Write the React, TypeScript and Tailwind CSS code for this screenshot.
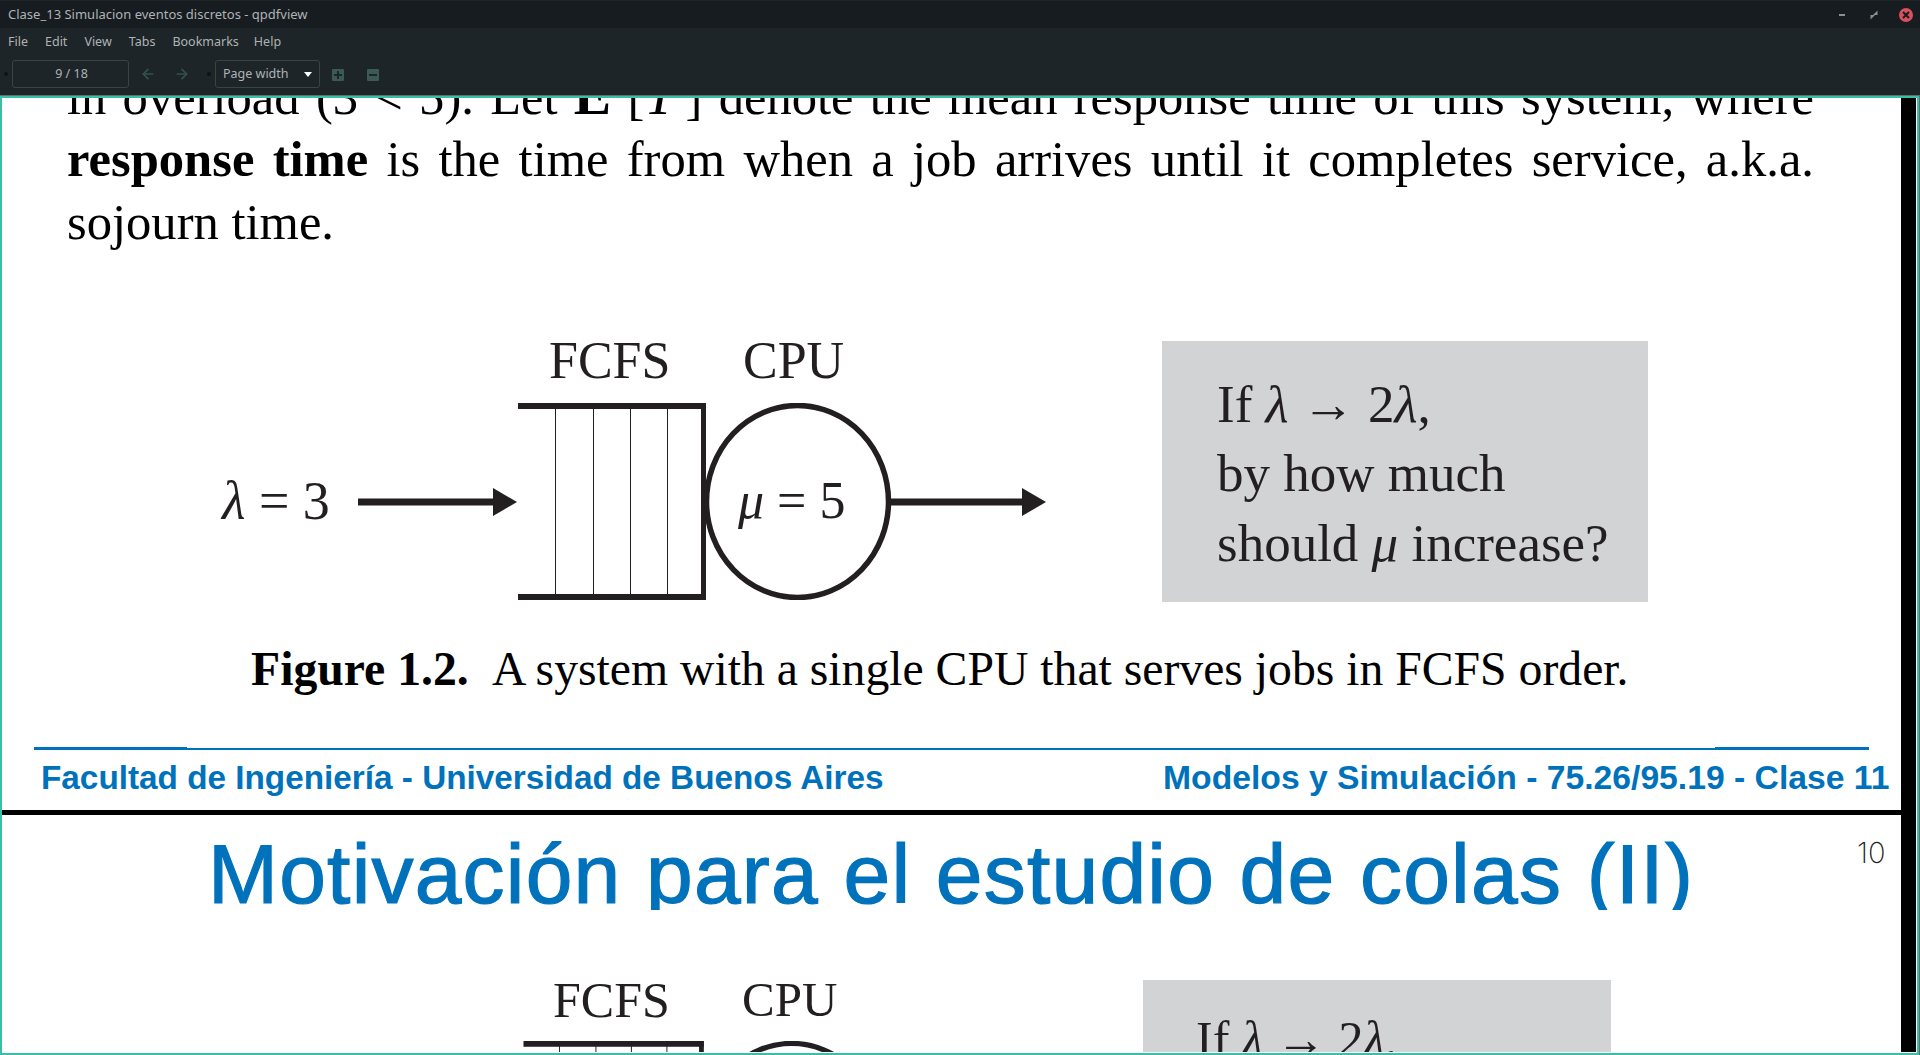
import React from 'react'
import { ArrowLeft, ArrowRight } from 'lucide-react'

const serif = `font-['Liberation_Serif',serif] text-[#231f20] leading-none whitespace-nowrap`
const sans = `font-['Liberation_Sans',sans-serif] text-[#0072bc] leading-none whitespace-nowrap`

// queue + server drawing, same shapes for both figures, only scaled
const QueueDiagram = ({ className, width, height }: { className: string; width: number; height: number }) => (
  <svg className={className} width={width} height={height} viewBox="0 0 688 197" fill="#231f20">
    <rect x="0" y="95.5" width="140" height="7" />
    <polygon points="135,85 159,99 135,113" />
    <rect x="160" y="0" width="188" height="6" />
    <rect x="160" y="191" width="188" height="6" />
    <rect x="343" y="0" width="5" height="197" />
    <rect x="197" y="3" width="1" height="190" />
    <rect x="235" y="3" width="1" height="190" />
    <rect x="272" y="3" width="1" height="190" />
    <rect x="309" y="3" width="1" height="190" />
    <ellipse cx="439.5" cy="98.5" rx="91" ry="96" fill="none" stroke="#231f20" strokeWidth="5.5" />
    <rect x="533" y="95.5" width="135" height="7" />
    <polygon points="664,85 688,99 664,113" />
  </svg>
)

const TitleBar = () => (
  <div className="flex h-[28px] items-center justify-between border-t border-[#1f272a] bg-[#161c1f] pl-[8px]">
    <span className="text-[13px] text-[#aeb3b5]">Clase_13 Simulacion eventos discretos - qpdfview</span>
    <div className="flex items-center">
      <span className="mr-[24px] h-[2px] w-[6px] bg-[#8b8f91]" />
      <svg className="mr-[20px]" width="10" height="10" viewBox="0 0 10 10" fill="#8b8f91">
        <polygon points="8.5,0.5 8.5,5 4,5" />
        <polygon points="1.5,9.5 1.5,5 6,5" />
      </svg>
      <div className="mr-[7px] flex h-[14px] w-[14px] items-center justify-center rounded-full bg-[#d9505e]">
        <svg width="8" height="8" viewBox="0 0 8 8" stroke="#161c1f" strokeWidth="2">
          <path d="M1 1 7 7M7 1 1 7" />
        </svg>
      </div>
    </div>
  </div>
)

const MenuBar = () => (
  <div className="flex h-[28px] items-center gap-[17px] bg-[#1d2528] pl-[8px] text-[12.5px] text-[#aeb3b5]">
    <span>File</span>
    <span>Edit</span>
    <span>View</span>
    <span>Tabs</span>
    <span className="-mr-[2px]">Bookmarks</span>
    <span>Help</span>
  </div>
)

const ToolBar = () => (
  <div className="flex h-[39px] items-start bg-[#1d2528] pt-[4px] text-[12.5px] text-[#aeb3b5]">
    <span className="ml-[4px] mt-[12px] h-[4px] w-[4px] rounded-full bg-[#0e1315]" />
    <div className="ml-[4px] flex h-[28px] w-[117px] items-center justify-center rounded-[3px] border border-[#3a4346] pl-[2px] pt-[1px]">9 / 18</div>
    <ArrowLeft className="ml-[11px] mt-[6px]" size={16} strokeWidth={2.5} color="#35524c" />
    <ArrowRight className="ml-[18px] mt-[6px]" size={16} strokeWidth={2.5} color="#35524c" />
    <span className="ml-[17px] mt-[12px] h-[4px] w-[4px] rounded-full bg-[#0e1315]" />
    <div className="ml-[4px] flex h-[28px] w-[105px] items-center justify-between rounded-[3px] border border-[#3a4346] pl-[7px] pr-[7px] pt-[1px]">
      <span>Page width</span>
      <span className="h-0 w-0 border-x-[4px] border-t-[5px] border-x-transparent border-t-white" />
    </div>
    <div className="ml-[12px] mt-[9px] flex h-[12px] w-[12px] items-center justify-center rounded-[1px] bg-[#3c5a55]">
      <svg width="8" height="8" viewBox="0 0 8 8" fill="#1d2528">
        <path d="M3 0h2v3h3v2H5v3H3V5H0V3h3z" />
      </svg>
    </div>
    <div className="ml-[23px] mt-[9px] flex h-[12px] w-[12px] items-center justify-center rounded-[1px] bg-[#3c5a55]">
      <span className="h-[2px] w-[8px] bg-[#1d2528]" />
    </div>
  </div>
)

const FirstSlide = () => (
  <div className="relative h-[712px] overflow-hidden bg-white">
    <p className={`${serif} absolute left-[65px] top-[-31px] w-[1747px] text-[50.6px] text-black [text-align-last:justify]`}>
      in overload (3 &lt; 5). Let <b className="text-[56px]">E</b>&nbsp;[<i className="text-[56px]">T</i>&thinsp;] denote the mean response time of this system, where
    </p>
    <p className={`${serif} absolute left-[65px] top-[36px] w-[1747px] text-[50.6px] text-black [text-align-last:justify]`}>
      <b>response time</b> is the time from when a job arrives until it completes service, a.k.a.
    </p>
    <p className={`${serif} absolute left-[65px] top-[99px] text-[50.6px] text-black`}>sojourn time.</p>

    <QueueDiagram className="absolute left-[356px] top-[305px]" width={688} height={197} />
    <span className={`${serif} absolute left-[547px] top-[237px] text-[52px]`}>FCFS</span>
    <span className={`${serif} absolute left-[741px] top-[237px] text-[52px]`}>CPU</span>
    <span className={`${serif} absolute left-[220px] top-[376px] text-[54px]`}><i>λ</i> = 3</span>
    <span className={`${serif} absolute left-[736px] top-[377px] text-[52px]`}><i>μ</i> = 5</span>

    <div className="absolute left-[1160px] top-[243px] h-[261px] w-[486px] bg-[#d1d3d4]" />
    <span className={`${serif} absolute left-[1215px] top-[280px] text-[53px]`}>If <i>λ</i> → 2<i>λ</i>,</span>
    <span className={`${serif} absolute left-[1215px] top-[349px] text-[53px]`}>by how much</span>
    <span className={`${serif} absolute left-[1215px] top-[419px] text-[53px]`}>should <i>μ</i> increase?</span>

    <p className={`${serif} absolute left-[249px] top-[547px] text-[47.7px] text-black`}>
      <b>Figure 1.2.</b>&nbsp;<span className="ml-[2px]"> A system with a single CPU that serves jobs in FCFS order.</span>
    </p>

    <div className="absolute left-[32px] top-[650px] h-[2px] w-[1835px] bg-[#0072bc]" />
    <div className="absolute left-[32px] top-[649px] h-[1px] w-[153px] bg-[#0072bc]" />
    <div className="absolute left-[1713px] top-[649px] h-[1px] w-[154px] bg-[#0072bc]" />
    <span className={`${sans} absolute left-[39px] top-[663px] text-[33.3px] font-bold`}>Facultad de Ingeniería - Universidad de Buenos Aires</span>
    <span className={`${sans} absolute left-[1161px] top-[663px] text-[33.7px] font-bold`}>Modelos y Simulación - 75.26/95.19 - Clase 11</span>
  </div>
)

const SecondSlide = () => (
  <div className="relative flex-1 overflow-hidden bg-white">
    <h1 className={`${sans} absolute left-[206px] top-[17px] text-[84px] font-normal tracking-[1.2px] [-webkit-text-stroke:1.2px_#0072bc]`}>Motivación para el estudio de colas (II)</h1>
    {/* the page clips the descenders of the title */}
    <div className="absolute left-[200px] top-[95px] h-[14px] w-[1482px] bg-white" />
    <span className={`absolute left-[1855px] top-[23px] font-['Inter',sans-serif] text-[29px] font-extralight leading-none text-[#231f20]`}>10</span>

    <span className={`${serif} absolute left-[551px] top-[160px] text-[50px]`}>FCFS</span>
    <span className={`${serif} absolute left-[740px] top-[160px] text-[49px]`}>CPU</span>
    <QueueDiagram className="absolute left-[368px] top-[226px]" width={660} height={189} />

    <div className="absolute left-[1141px] top-[165px] h-[100px] w-[468px] bg-[#d1d3d4]" />
    <span className={`${serif} absolute left-[1194px] top-[199px] text-[50px]`}>If <i>λ</i> → 2<i>λ</i>,</span>
  </div>
)

const App = () => {
  return (
    <div className="flex h-screen flex-col overflow-hidden bg-[#1d2528] font-['Noto_Sans',sans-serif]">
      <TitleBar />
      <MenuBar />
      <ToolBar />
      <div className="flex min-h-0 flex-1 flex-col border-t border-r border-[#5f6f6c]">
        <div className="flex min-h-0 flex-1 border-2 border-[#38bfa5] bg-white pb-[1px] pr-[1px]">
          <div className="flex w-[1899px] flex-col">
            <FirstSlide />
            <div className="h-[5px] bg-black" />
            <SecondSlide />
          </div>
          <div className="flex-1 bg-black" />
        </div>
      </div>
    </div>
  )
}

export default App
